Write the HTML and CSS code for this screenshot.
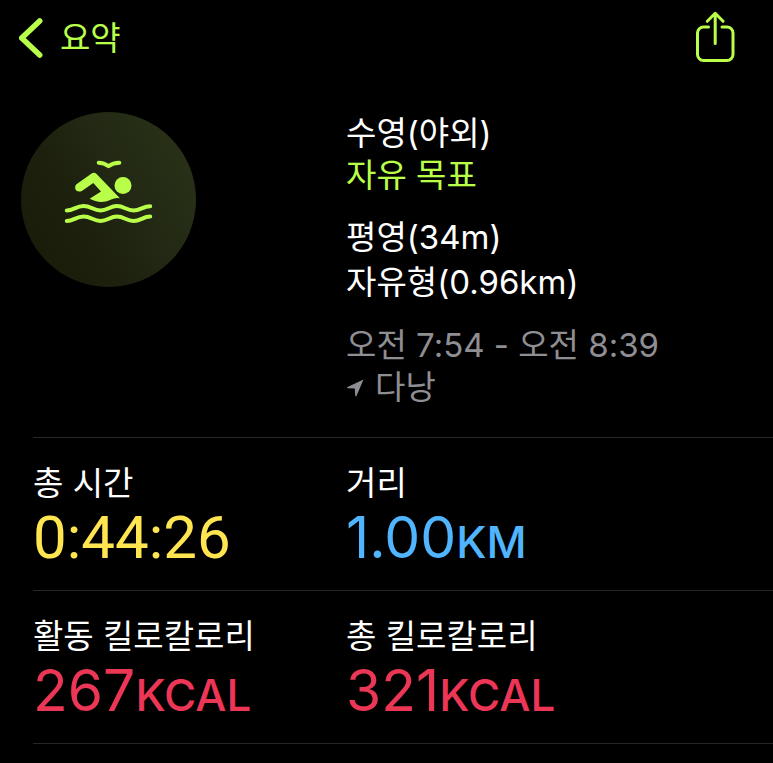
FILE: index.html
```html
<!DOCTYPE html>
<html lang="ko">
<head>
<meta charset="utf-8">
<meta name="viewport" content="width=device-width, initial-scale=1">
<title>수영(야외)</title>
<link rel="stylesheet" href="styles.css">
</head>
<body>
<header class="bar">
  <a class="back" href="#">
    <svg class="chevron" viewBox="0 0 24 40" aria-hidden="true"><path d="M20.700 3 2.700 20l18 17"/></svg>
    <span>요약</span>
  </a>
  <button class="share" type="button" aria-label="공유">
    <svg viewBox="0 1 40 52" aria-hidden="true"><path d="M13.500 16H8.500a6 6 0 0 0-6 6v21.500a6 6 0 0 0 6 6h23.500a6 6 0 0 0 6-6V22a6 6 0 0 0-6-6h-5"/><path d="M20.200 32.500V2.500M12.300 10.300l7.900-8 7.900 8"/></svg>
  </button>
</header>
<main>
  <section class="hero">
    <div class="badge">
      <svg viewBox="-1 10 120 90" aria-hidden="true">
        <g class="wave">
          <path d="M16.800 65.500C23.500 65.500 26 61 33.500 61S43.500 65.500 50.500 65.500 60 61 67 61s9.500 4.500 16.500 4.500S93 61.200 100.200 61.200"/>
          <path d="M16.800 76C23.500 76 26 71.500 33.500 71.500S43.500 76 50.500 76 60 71.500 67 71.500 76.500 76 83.500 76 93 71.600 100.200 71.600"/>
        </g>
        <path class="bird" d="M48.700 17.800Q54 18 58.500 21.200 63 18 69.300 17.800"/>
        <circle class="fill" cx="73" cy="40.600" r="8.500"/>
        <path class="fill" d="M41.300 28.800Q44 26.700 46.800 29.300L69.900 53.300Q66 52 60.500 54.800C53 58.500 46 57 39.700 53.700L51 46.500 43.300 37.900 32.200 45.700C26 49 22.500 41.600 27.500 38.500Z"/>
      </svg>
    </div>
    <div class="details">
      <div class="group">
        <h1>수영(야외)</h1>
        <p class="goal">자유 목표</p>
      </div>
      <div class="group strokes">
        <p>평영(34m)</p>
        <p>자유형(0.96km)</p>
      </div>
      <div class="group muted">
        <p>오전 7:54 - 오전 8:39</p>
        <p class="place"><svg viewBox="0 0 18 20" aria-hidden="true"><path d="M17.500 2.500 10.600 18.800Q9.700 20.200 9.200 18.600L8.800 11.600 1.600 11.200Q.4 10.600 1.600 9.900Z"/></svg><span>다낭</span></p>
      </div>
    </div>
  </section>
  <dl class="stats">
    <div class="row">
      <div class="stat"><dt>총 시간</dt><dd class="time">0:44:26</dd></div>
      <div class="stat"><dt>거리</dt><dd class="distance">1.00<span class="unit">KM</span></dd></div>
    </div>
    <div class="row">
      <div class="stat"><dt>활동 킬로칼로리</dt><dd class="energy">267<span class="unit">KCAL</span></dd></div>
      <div class="stat"><dt>총 킬로칼로리</dt><dd class="energy">321<span class="unit">KCAL</span></dd></div>
    </div>
  </dl>
</main>
</body>
</html>
```
FILE: styles.css
```css
* { box-sizing: border-box; }

body {
  margin: 0;
  background: #000;
  color: #fff;
  font-family: Inter, "Noto Sans CJK KR", sans-serif;
  font-size: 33px;
  line-height: 42px;
}

h1, p, dl, dd { margin: 0; font-size: inherit; font-weight: inherit; }

.bar {
  display: flex;
  justify-content: space-between;
  align-items: center;
  height: 76px;
  padding: 0 38px 0 19px;
}

.back {
  display: flex;
  align-items: center;
  gap: 17px;
  color: #b9ff4a;
  text-decoration: none;
}

.chevron { width: 24px; height: 40px; }

.chevron path {
  fill: none;
  stroke: currentColor;
  stroke-width: 5.5;
  stroke-linecap: round;
  stroke-linejoin: round;
}

.share {
  width: 40px;
  height: 52px;
  padding: 0;
  border: 0;
  background: none;
  color: #b9ff4a;
}

.share svg {
  display: block;
  overflow: visible;
  fill: none;
  stroke: currentColor;
  stroke-width: 3;
  stroke-linecap: round;
  stroke-linejoin: round;
}

.hero, .row {
  display: grid;
  grid-template-columns: 11fr 15fr;
}

.hero {
  margin-left: 33px;
  padding: 36px 0 29px;
}

.badge {
  display: flex;
  justify-content: center;
  align-items: center;
  width: 175px;
  height: 175px;
  margin-left: -12px;
  border-radius: 50%;
  background: linear-gradient(60deg, #191c08 10%, #1c200d 35%, #232914 60%, #293318 95%);
  color: #b9ff4a;
}

.badge svg { width: 120px; height: 90px; }

.fill { fill: currentColor; }

.wave, .bird {
  fill: none;
  stroke: currentColor;
  stroke-width: 4;
  stroke-linecap: round;
  stroke-linejoin: round;
}

.details {
  display: flex;
  flex-direction: column;
  gap: 19px;
}

.goal { color: #b9ff4a; }
.strokes { line-height: 45px; }
.muted { color: #8e8e93; }

.place {
  display: flex;
  align-items: center;
  gap: 11px;
}

.place svg {
  width: 18px;
  height: 20px;
  fill: currentColor;
}

.row {
  margin-left: 33px;
  padding: 24px 0 18px;
  border-top: 1px solid #262628;
}

.row:last-child { border-bottom: 1px solid #262628; }

dd {
  font-size: 57px;
  line-height: 68px;
}

.unit { font-size: 44px; font-weight: 500; line-height: 1; }
.time { color: #ffe651; font-family: Roboto, sans-serif; font-size: 60px; }
.distance { color: #50b4ff; }
.energy { color: #eb3656; }
```
